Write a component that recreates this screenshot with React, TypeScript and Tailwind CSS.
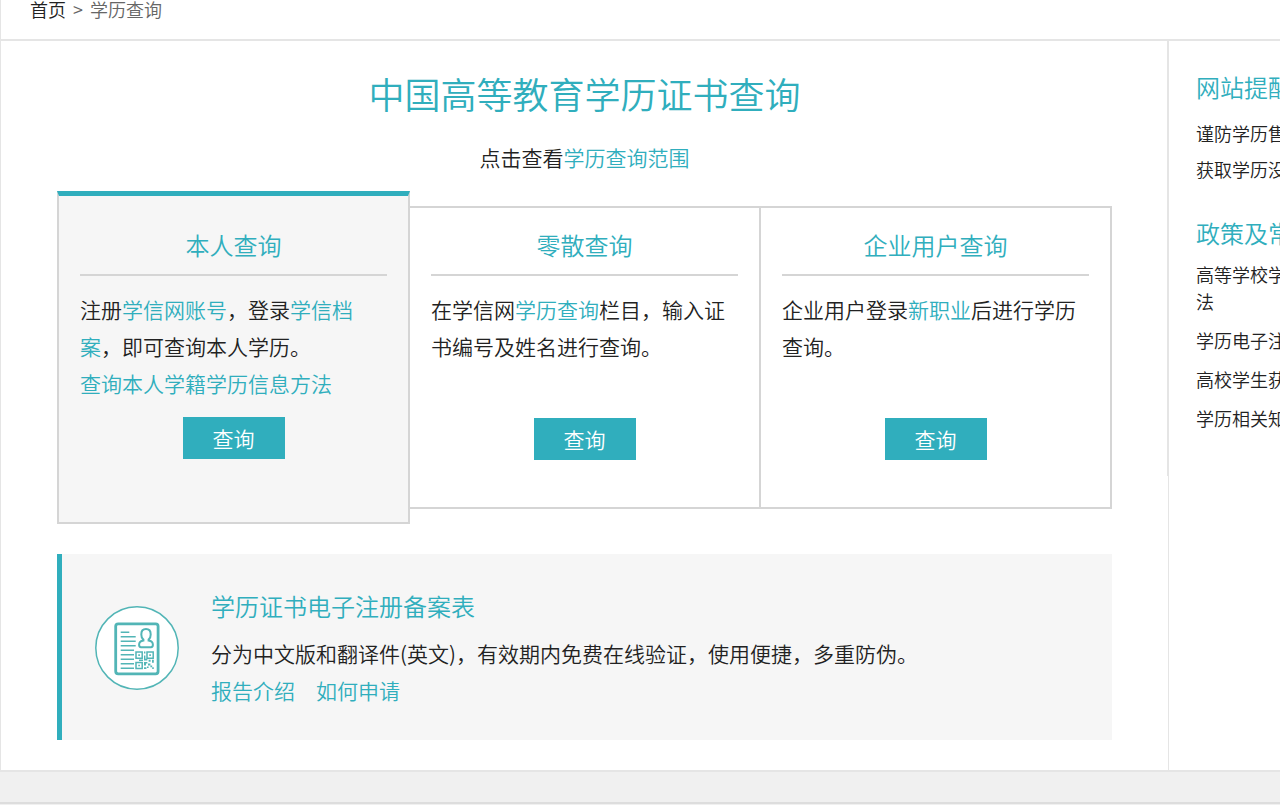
import React from "react";

const linkStyle = "text-[#30aebd] hover:underline";

const sideGroups = [
  {
    title: "网站提醒",
    listStyle: "mt-[10px] text-lg leading-9",
    items: ["谨防学历售", "获取学历没"],
  },
  {
    title: "政策及常",
    listStyle: "mt-[10px] flex flex-col gap-3 text-lg leading-[27px]",
    items: ["高等学校学\n法", "学历电子注", "高校学生获", "学历相关知"],
  },
];

type CardProps = {
  title: string;
  active?: boolean;
  children: React.ReactNode;
};

function QueryCard({ title, active = false, children }: CardProps) {
  return (
    <section
      className={
        active
          ? "-ml-[2px] flex flex-col border-2 border-t-[5px] border-[#d5d5d5] border-t-[#30aebd] bg-[#f6f6f6] px-[21px] pt-[30px] pb-[63px]"
          : "my-[15px] flex flex-col border-y-2 border-r-2 border-[#d5d5d5] px-[21px] pt-[18px] pb-[47px]"
      }
    >
      <h2 className="border-b-2 border-[#d5d5d5] pb-[10px] text-center text-2xl leading-[38px] text-[#30aebd]">
        {title}
      </h2>
      <p className="mt-[15px] mb-[15px] min-h-[111px] text-[21px] leading-[37px]">
        {children}
      </p>
      <button
        type="button"
        className="mx-auto mt-auto h-[42px] w-[102px] cursor-pointer bg-[#30aebd] text-[21px] leading-[42px] text-white"
      >
        查询
      </button>
    </section>
  );
}

function ReportIcon() {
  return (
    <svg
      viewBox="0 0 84 84"
      className="size-[84px] shrink-0"
      fill="none"
      stroke="#52b5b6"
      aria-hidden="true"
    >
      <circle cx="42" cy="42" r="41.2" fill="#fff" strokeWidth="1.5" />
      <rect x="20.7" y="17.8" width="42.4" height="50" rx="2.5" strokeWidth="2.8" />
      <path
        d="M25.7 26.3h8.6M25.7 30.7h15M25.7 35.3h15M25.7 39.7h15M25.7 44.2h13.3M25.7 48.7h13.3M25.7 53.2h13.3M25.7 57.7h13.3M25.7 62.2h13.3"
        strokeWidth="1.4"
      />
      <path
        d="M48.4 33.6c-1.6-1.2-2.1-3-2.1-5.2 0-3.3 1.8-5.4 4.7-5.4s4.7 2.1 4.7 5.4c0 2.2-.5 4-2.1 5.2v1c2.6.4 4.3 1.7 4.3 4.2 0 1.6-.6 2.4-1.9 2.4H46c-1.3 0-1.9-.8-1.9-2.4 0-2.5 1.7-3.8 4.3-4.2z"
        strokeWidth="2"
      />
      <path
        d="M41 46h6.2v6.2H41zM52 46h6.2v6.2H52zM41 56.4h6.2v6.2H41z"
        strokeWidth="1.5"
      />
      <path
        d="M43.3 48.3h1.6v1.6h-1.6zM54.3 48.3h1.6v1.6h-1.6zM43.3 58.7h1.6v1.6h-1.6zM49 45.4h1.4v2H49zM49 49.4h1.4v3.4h2v1.6h-3.4zM44 53.6h4v1.4h-4zM53.6 53.8h2v2h-2zM57 53.8h1.8v3H57zM49 56h3.4v1.6H51v2h-2zM53 57.6h2.4v1.8H53zM55.4 59.4h1.8v1.8h-1.8zM49 61.2h2.4v1.8H49zM52 60.4h1.6v1.6H52zM57.2 61.2h1.6v1.8h-1.6z"
        fill="#52b5b6"
        stroke="none"
      />
    </svg>
  );
}

export default function App() {
  return (
    <div
      lang="zh-CN"
      className="min-h-screen overflow-hidden bg-[#f0f0f0] font-['Noto_Sans_CJK_SC',sans-serif] font-[350] text-[#222]"
    >
      <div className="border-b-2 border-[#e5e5e5] bg-white">
        <nav className="flex gap-[7px] border-b-2 border-l border-[#e5e5e5] pb-[21px] pl-[29px] text-lg leading-[18px] text-[#666]">
          <a href="#" className="text-[#222]">
            首页
          </a>
          <span>&gt;</span>
          <span>学历查询</span>
        </nav>

        <div className="flex">
          <main className="min-w-0 flex-1 border-l border-[#e5e5e5] pt-7 pr-[55px] pb-[30px] pl-14">
            <h1 className="text-center text-4xl leading-[48px] text-[#30aebd]">
              中国高等教育学历证书查询
            </h1>
            <p className="mt-[22px] mb-4 text-center text-[21px] leading-9">
              点击查看
              <a href="#" className={linkStyle}>
                学历查询范围
              </a>
            </p>

            <div className="grid grid-cols-3 pl-[2px]">
              <QueryCard title="本人查询" active>
                注册
                <a href="#" className={linkStyle}>
                  学信网账号
                </a>
                ，登录
                <a href="#" className={linkStyle}>
                  学信档案
                </a>
                ，即可查询本人学历。
                <br />
                <a href="#" className={linkStyle}>
                  查询本人学籍学历信息方法
                </a>
              </QueryCard>
              <QueryCard title="零散查询">
                在学信网
                <a href="#" className={linkStyle}>
                  学历查询
                </a>
                栏目，输入证书编号及姓名进行查询。
              </QueryCard>
              <QueryCard title="企业用户查询">
                企业用户登录
                <a href="#" className={linkStyle}>
                  新职业
                </a>
                后进行学历查询。
              </QueryCard>
            </div>

            <section className="mt-[30px] flex items-center gap-8 border-l-[5px] border-[#30aebd] bg-[#f6f6f6] pt-[33px] pb-[31px] pl-[33px]">
              <ReportIcon />
              <div className="text-[21px] leading-[37px]">
                <h2 className="mb-[11px] text-2xl leading-[37px] text-[#30aebd]">
                  学历证书电子注册备案表
                </h2>
                <p>
                  分为中文版和翻译件(英文)，有效期内免费在线验证，使用便捷，多重防伪。
                </p>
                <div className="flex gap-[21px]">
                  <a href="#" className={linkStyle}>
                    报告介绍
                  </a>
                  <a href="#" className={linkStyle}>
                    如何申请
                  </a>
                </div>
              </div>
            </section>
          </main>

          <aside className="flex w-[113px] shrink-0 flex-col overflow-hidden">
            <div className="flex flex-col gap-7 border-l-2 border-[#e5e5e5] pt-7 pb-11 pl-[27px]">
              {sideGroups.map((group) => (
                <section key={group.title} className="whitespace-pre">
                  <h3 className="text-2xl leading-9 text-[#30aebd]">
                    {group.title}
                  </h3>
                  <ul className={group.listStyle}>
                    {group.items.map((item) => (
                      <li key={item}>
                        <a href="#">{item}</a>
                      </li>
                    ))}
                  </ul>
                </section>
              ))}
            </div>
            <div className="ml-px flex-1 border-l border-[#e5e5e5]"></div>
          </aside>
        </div>
      </div>
      <footer className="mt-[30px] border-t-2 border-[#ddd] bg-[#f0f0f0] pb-px"></footer>
    </div>
  );
}
